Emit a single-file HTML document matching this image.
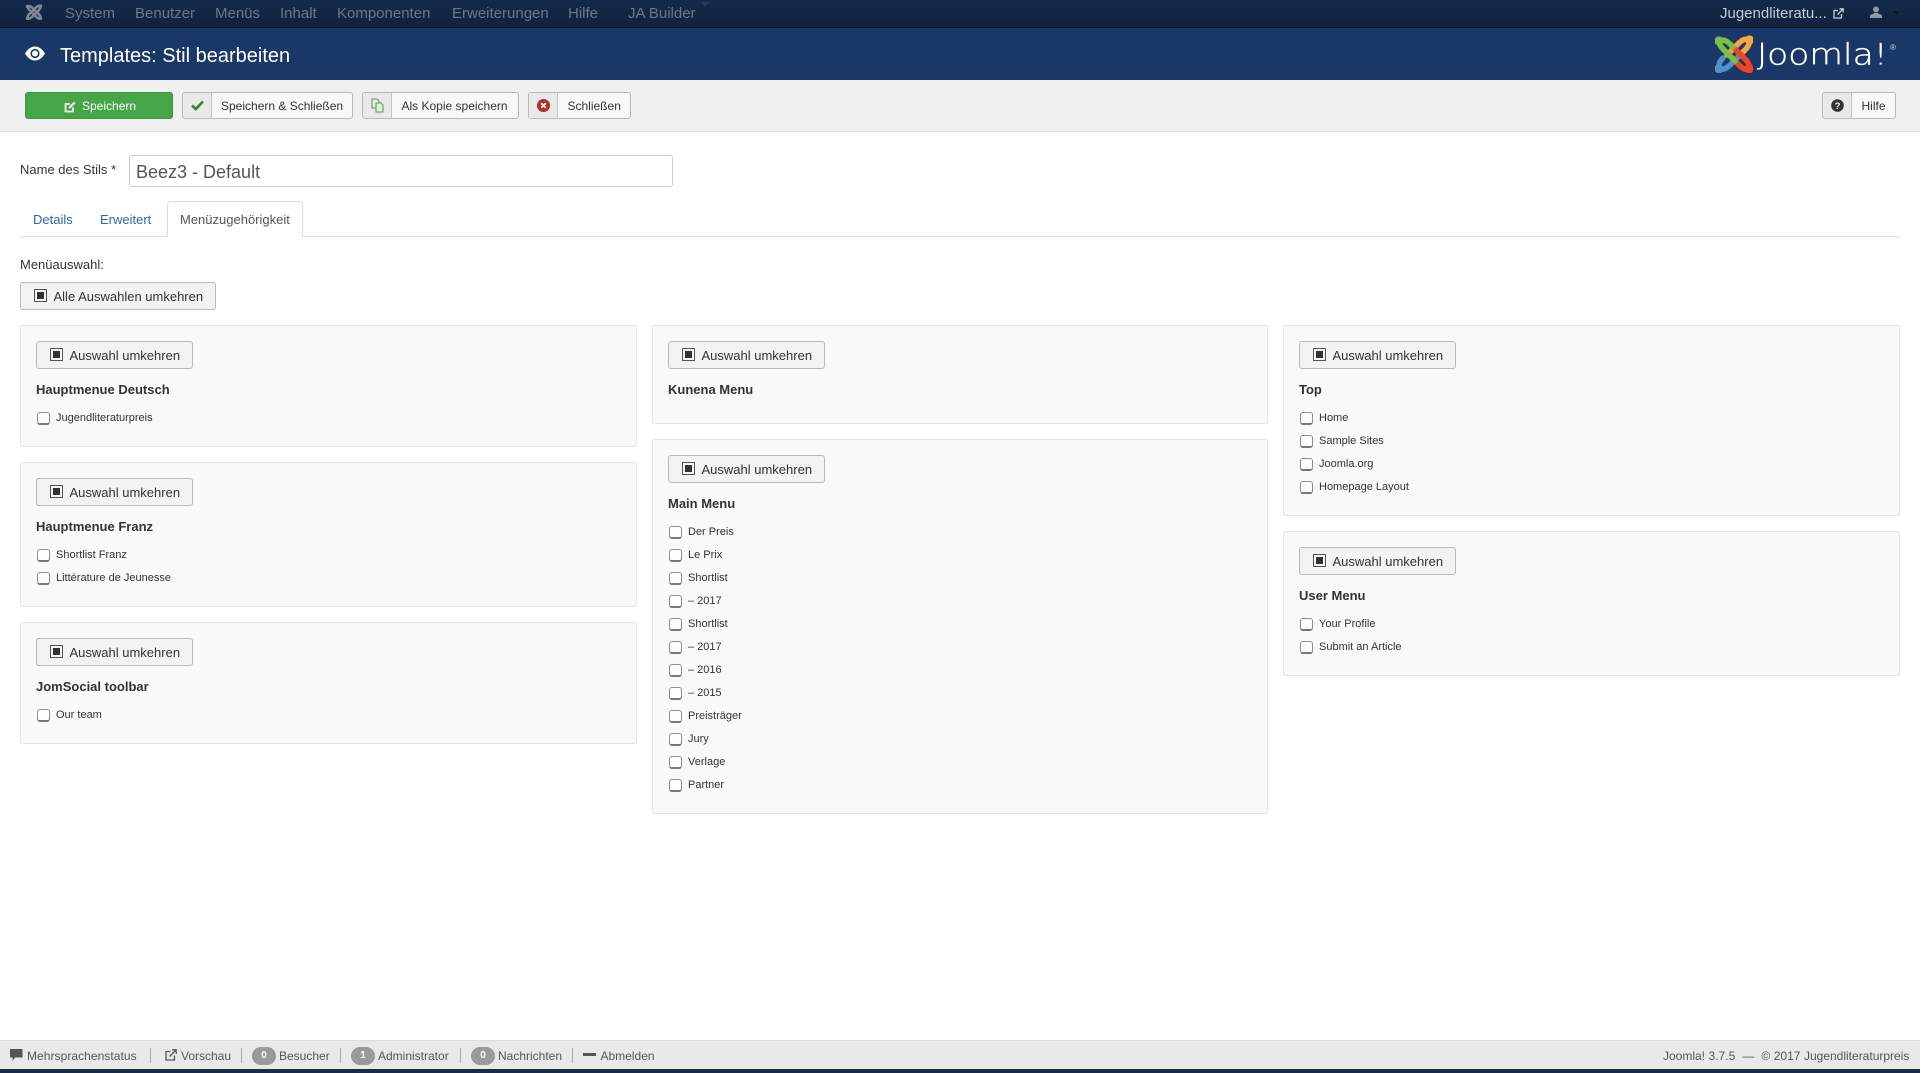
<!DOCTYPE html>
<html lang="de"><head><meta charset="utf-8"><title>Templates: Stil bearbeiten</title>
<style>
*{box-sizing:border-box}
html,body{margin:0;padding:0;width:1920px;height:1073px;overflow:hidden;background:#fff;font-family:"Liberation Sans",sans-serif;font-size:13px;color:#333}
.a{position:absolute;white-space:nowrap}
#top{position:absolute;left:0;top:0;width:1920px;height:28px;background:linear-gradient(#15294a,#0f2340);border-bottom:1px solid #0a1a33}
#top .a{font-size:15px;line-height:28px;top:0;color:#6c7889}
#hdr{position:absolute;left:0;top:28px;width:1920px;height:52px;background:#1a3867}
#bar{position:absolute;left:0;top:80px;width:1920px;height:52px;background:#f0f0f0;border-bottom:1px solid #dedede}
.btn{position:absolute;top:92px;height:27px;background:#f8f8f8;border:1px solid #b8b8b8;border-radius:3px;font-size:12px;line-height:27px;color:#333;white-space:nowrap}
.btn .ic{position:absolute;left:0;top:0;height:25px;background:#e9e9e9;border-right:1px solid #c4c4c4;border-radius:2px 0 0 2px}
.btn .ic svg{position:absolute}
.btn .t{position:absolute;top:0}
.tg{position:absolute;height:28px;background:#f3f3f3;border:1px solid #b9b9b9;border-radius:3px;font-size:13px;line-height:27px;color:#333;white-space:nowrap}
.tg i{position:absolute;left:12.5px;top:6px;width:13px;height:13px;border:1px solid #555;background:#f3f3f3}
.tg i:after{content:"";position:absolute;left:2px;top:2px;width:7px;height:7px;background:#333}
.tg span{position:absolute;left:32.5px;top:0}
.p{position:absolute;background:#f9f9f9;border:1px solid #e3e3e3;border-radius:3px}
.p .tg{left:15px;top:15px;width:157px}
.p h4{position:absolute;left:15px;top:55px;margin:0;font-size:13px;line-height:17px;font-weight:bold;color:#333;white-space:nowrap}
.r{position:absolute;left:16px;height:16px;font-size:11px;line-height:14px;color:#333;white-space:nowrap}
.r i{position:absolute;left:-.5px;top:2px;width:13px;height:13px;background:#fdfdfd;border:1px solid #8e8e8e;border-bottom:2px solid #777;border-radius:3px}
.r span{position:absolute;left:19px;top:1px}
#foot{position:absolute;left:0;top:1040px;width:1920px;height:29px;background:#e9e9e9;border-top:1px solid #dcdcdc}
#dark{position:absolute;left:0;top:1069px;width:1920px;height:4px;background:#1b2a45}
#foot .a{top:1px;font-size:12px;line-height:28px;color:#555}
#foot .s{position:absolute;top:7px;width:1px;height:15px;background:#aaa}
#foot .b{position:absolute;top:6px;width:24px;height:18px;border-radius:9px;background:#999;color:#fff;font-size:10px;font-weight:bold;line-height:18px;text-align:center}
</style></head><body>

<div id="top">
<svg class="a" style="left:25px;top:4px" width="18" height="16" viewBox="0 0 38 38" fill="none" stroke="#7d8796" stroke-width="6" stroke-linecap="round">
<path d="M4 6C8 4 12 6 15 9L29 23M4 6C4 10 7 13 10 16L24 30"/>
<path d="M34 5C30 3 27 5 24 8L10 22M34 5C35 9 33 12 30 15L15 30"/>
<path d="M4 34C8 36 12 33 15 30M4 34C3 30 5 26 10 22"/>
<path d="M34 34C30 36 27 33 24 30M34 34C35 30 33 26 29 23"/>
<g fill="#7d8796" stroke="none"><circle cx="4" cy="6" r="4.500"/><circle cx="34" cy="5" r="4.500"/><circle cx="4" cy="34" r="4.500"/><circle cx="34" cy="34" r="4.500"/></g>
</svg>
<span class="a" style="left:65px">System</span>
<span class="a" style="left:135px">Benutzer</span>
<span class="a" style="left:215px">Menüs</span>
<span class="a" style="left:280px">Inhalt</span>
<span class="a" style="left:337px">Komponenten</span>
<span class="a" style="left:452px">Erweiterungen</span>
<span class="a" style="left:568px">Hilfe</span>
<span class="a" style="left:628px">JA Builder</span>
<svg class="a" style="left:701px;top:2px" width="8" height="5" viewBox="0 0 8 5"><path d="M0 0H8L4 5Z" fill="#2c3a52"/></svg>
<span class="a" style="left:1720px;color:#c6ccd6">Jugendliteratu...</span>
<svg class="a" style="left:1833px;top:8px" width="11" height="11" viewBox="0 0 11 11" fill="none" stroke="#c6ccd6" stroke-width="1.300"><path d="M5 2.500H1V10H8.500V6M4.500 6.500L10 1M6.500 .8H10.200V4.500"/></svg>
<svg class="a" style="left:1870px;top:6px" width="12" height="12" viewBox="0 0 12 12" fill="#8d97a6"><circle cx="6" cy="3.500" r="3"/><path d="M0 12V10C0 8.500 3 8 4.500 7H7.500C9 8 12 8.500 12 10V12Z"/></svg>
<svg class="a" style="left:1893px;top:11px" width="7" height="4" viewBox="0 0 7 4"><path d="M0 0H7L3.500 4Z" fill="#0b1729"/></svg>
</div>

<div id="hdr">
<svg class="a" style="left:25px;top:18px" width="20" height="15" viewBox="0 0 20 15"><path d="M0 7.500C3 2.500 6.500 .5 10 .5S17 2.500 20 7.500C17 12.500 13.500 14.500 10 14.500S3 12.500 0 7.500Z" fill="#fff"/><circle cx="10" cy="7.500" r="4.600" fill="#1a3867"/><circle cx="10" cy="7.500" r="3" fill="#fff"/></svg>
<span class="a" style="left:60px;top:1px;line-height:54px;font-size:20px;color:#fff">Templates: Stil bearbeiten</span>
<svg class="a" style="left:1714.500px;top:7px" width="38" height="38" viewBox="0 0 38 38" fill="none" stroke-width="5.500" stroke-linecap="round" stroke-linejoin="round">
<g stroke="#f9a541"><path d="M34 5C30 3 27 5 24 8L12 20"/><path d="M34 5C35 9 33 12 30 15L26 19"/></g>
<circle cx="34.500" cy="5" r="4.600" fill="#f9a541"/>
<g stroke="#5091cd"><path d="M4 33.500C8 35.500 12 33 15 30L26 19"/><path d="M4 33.500C3 29 5 26 8 23"/></g>
<circle cx="4" cy="33.700" r="4.600" fill="#5091cd"/>
<g stroke="#f44321"><path d="M34 33.500C35 29 32 26 29 23L20 14"/><path d="M34 33.500C30 35.500 27 33 24 30L20 26"/></g>
<circle cx="34" cy="33.700" r="4.600" fill="#f44321"/>
<g stroke="#7ac143"><path d="M4 6C8 4 12 6 15 9L18 12"/><path d="M4 6C4 10 7 13 10 16L20 26"/></g>
<circle cx="4" cy="6" r="4.600" fill="#7ac143"/>
</svg>
<svg class="a" style="left:1755px;top:0" width="145" height="52" viewBox="0 0 145 52"><text transform="translate(2 36.700) scale(1.190 1)" x="0" y="0" font-family="DejaVu Sans" font-size="29" font-weight="200" fill="#fff" stroke="#fff" stroke-width=".35">Joomla!</text><text x="135" y="22" font-family="Liberation Sans" font-size="8" fill="#cfd6e0">®</text></svg>
</div>

<div id="bar"></div>
<div class="btn" style="left:25px;width:148px;background:#46a546;border-color:#3f953f;color:#fff">
<svg class="a" style="left:38px;top:7.500px" width="12" height="12" viewBox="0 0 12 12" fill="none" stroke="#f1f8f1" stroke-width="1.700"><path d="M9 6.500V10.500H1.500V3H6"/><path d="M4.500 7.800L5 5.500L10 .8L11.500 2.300L6.500 7.200Z" fill="#f1f8f1" stroke="none"/></svg>
<span class="t" style="left:56px">Speichern</span></div>
<div class="btn" style="left:182px;width:171px"><div class="ic" style="width:29px"><svg style="left:8px;top:7px" width="13" height="11" viewBox="0 0 13 11" fill="none" stroke="#378137" stroke-width="2.600"><path d="M1 5.500L4.800 9L12 1.500"/></svg></div><span class="t" style="left:38px">Speichern &amp; Schließen</span></div>
<div class="btn" style="left:362px;width:157px"><div class="ic" style="width:29px"><svg style="left:8px;top:5px" width="13" height="15" viewBox="0 0 13 15" fill="#e9e9e9" stroke="#54a254" stroke-width="1.100"><path d="M1 1H6L8 3V10H1Z"/><path d="M5 5H10L12 7V14H5Z"/></svg></div><span class="t" style="left:38.500px">Als Kopie speichern</span></div>
<div class="btn" style="left:528px;width:103px"><div class="ic" style="width:29px"><svg style="left:8px;top:6px" width="13" height="13" viewBox="0 0 13 13"><circle cx="6.500" cy="6.500" r="6.500" fill="#b62a2a"/><path d="M4.200 4.200L8.800 8.800M8.800 4.200L4.200 8.800" stroke="#fff" stroke-width="1.900"/></svg></div><span class="t" style="left:38.500px">Schließen</span></div>
<div class="btn" style="left:1822px;width:74px"><div class="ic" style="width:29px"><svg style="left:8px;top:6px" width="13" height="13" viewBox="0 0 13 13"><circle cx="6.500" cy="6.500" r="6.300" fill="#333"/><text x="6.500" y="10" font-family="Liberation Sans" font-size="9.500" font-weight="bold" fill="#fff" text-anchor="middle">?</text></svg></div><span class="t" style="left:38.500px">Hilfe</span></div>

<span class="a" style="left:20px;top:162px;line-height:16px">Name des Stils *</span>
<div class="a" style="left:129px;top:155px;width:544px;height:32px;background:#fff;border:1px solid #ccc;border-radius:3px;font-size:18px;line-height:33px;padding-left:6px;color:#555">Beez3 - Default</div>

<div class="a" style="left:20px;top:236px;width:1880px;height:1px;background:#ddd"></div>
<div class="a" style="left:167px;top:201px;width:136px;height:36px;background:#fff;border:1px solid #ddd;border-bottom:0;border-radius:4px 4px 0 0"></div>
<span class="a" style="left:33px;top:212px;line-height:16px;color:#2a69a5">Details</span>
<span class="a" style="left:100px;top:212px;line-height:16px;color:#2a69a5">Erweitert</span>
<span class="a" style="left:180px;top:212px;line-height:16px;color:#555">Menüzugehörigkeit</span>

<span class="a" style="left:20px;top:257px;line-height:16px">Menüauswahl:</span>
<div class="tg" style="left:20px;top:282px;width:196px"><i></i><span>Alle Auswahlen umkehren</span></div>

<div class="p" style="left:20px;top:325px;width:617px;height:122px"><div class="tg"><i></i><span>Auswahl umkehren</span></div><h4>Hauptmenue Deutsch</h4>
<div class="r" style="top:84px"><i></i><span>Jugendliteraturpreis</span></div></div>

<div class="p" style="left:20px;top:462px;width:617px;height:145px"><div class="tg"><i></i><span>Auswahl umkehren</span></div><h4>Hauptmenue Franz</h4>
<div class="r" style="top:84px"><i></i><span>Shortlist Franz</span></div>
<div class="r" style="top:107px"><i></i><span>Littérature de Jeunesse</span></div></div>

<div class="p" style="left:20px;top:622px;width:617px;height:122px"><div class="tg"><i></i><span>Auswahl umkehren</span></div><h4>JomSocial toolbar</h4>
<div class="r" style="top:84px"><i></i><span>Our team</span></div></div>

<div class="p" style="left:652px;top:325px;width:616px;height:99px"><div class="tg"><i></i><span>Auswahl umkehren</span></div><h4>Kunena Menu</h4></div>

<div class="p" style="left:652px;top:439px;width:616px;height:375px"><div class="tg"><i></i><span>Auswahl umkehren</span></div><h4>Main Menu</h4>
<div class="r" style="top:84px"><i></i><span>Der Preis</span></div>
<div class="r" style="top:107px"><i></i><span>Le Prix</span></div>
<div class="r" style="top:130px"><i></i><span>Shortlist</span></div>
<div class="r" style="top:153px"><i></i><span>– 2017</span></div>
<div class="r" style="top:176px"><i></i><span>Shortlist</span></div>
<div class="r" style="top:199px"><i></i><span>– 2017</span></div>
<div class="r" style="top:222px"><i></i><span>– 2016</span></div>
<div class="r" style="top:245px"><i></i><span>– 2015</span></div>
<div class="r" style="top:268px"><i></i><span>Preisträger</span></div>
<div class="r" style="top:291px"><i></i><span>Jury</span></div>
<div class="r" style="top:314px"><i></i><span>Verlage</span></div>
<div class="r" style="top:337px"><i></i><span>Partner</span></div></div>

<div class="p" style="left:1283px;top:325px;width:617px;height:191px"><div class="tg"><i></i><span>Auswahl umkehren</span></div><h4>Top</h4>
<div class="r" style="top:84px"><i></i><span>Home</span></div>
<div class="r" style="top:107px"><i></i><span>Sample Sites</span></div>
<div class="r" style="top:130px"><i></i><span>Joomla.org</span></div>
<div class="r" style="top:153px"><i></i><span>Homepage Layout</span></div></div>

<div class="p" style="left:1283px;top:531px;width:617px;height:145px"><div class="tg"><i></i><span>Auswahl umkehren</span></div><h4>User Menu</h4>
<div class="r" style="top:84px"><i></i><span>Your Profile</span></div>
<div class="r" style="top:107px"><i></i><span>Submit an Article</span></div></div>

<div id="foot">
<svg class="a" style="left:10px;top:8px" width="13" height="13" viewBox="0 0 13 13" fill="#555"><path d="M0 0H12.500V8.500H5L2.500 12V8.500H0Z"/></svg>
<span class="a" style="left:27px;letter-spacing:.05px">Mehrsprachenstatus</span><div class="s" style="left:150px"></div>
<svg class="a" style="left:165px;top:8px" width="12" height="12" viewBox="0 0 12 12" fill="none" stroke="#555" stroke-width="1.300"><path d="M5.500 2.500H1V11H9.500V6.500M4.500 7.500L11 1M7 .8H11.200V5"/></svg>
<span class="a" style="left:181px">Vorschau</span><div class="s" style="left:241px"></div>
<div class="b" style="left:252px">0</div><span class="a" style="left:279px">Besucher</span><div class="s" style="left:340px"></div>
<div class="b" style="left:351px">1</div><span class="a" style="left:378px">Administrator</span><div class="s" style="left:460px"></div>
<div class="b" style="left:471px">0</div><span class="a" style="left:498px">Nachrichten</span><div class="s" style="left:572px"></div>
<div class="a" style="left:583px;top:12px;width:13px;height:3px;background:#555"></div>
<span class="a" style="left:600.500px">Abmelden</span>
<span class="a" style="left:1663px;word-spacing:.2px">Joomla! 3.7.5 &nbsp;— &nbsp;© 2017 Jugendliteraturpreis</span>
</div>
<div id="dark"></div>
</body></html>
